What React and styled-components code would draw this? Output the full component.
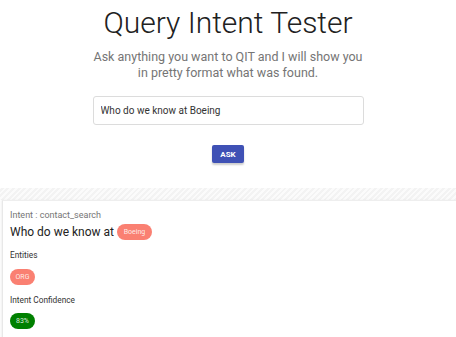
import styled, { createGlobalStyle } from 'styled-components';

const GlobalStyle = createGlobalStyle`
  body {
    margin: 0;
    background: #ffffff;
    font-family: Roboto, "Liberation Sans", sans-serif;
  }
`;

const Page = styled.div`
  width: 100%;
  overflow: hidden;
`;

const Header = styled.header`
  display: flex;
  flex-direction: column;
  align-items: center;
  padding-top: 5px;
`;

const Title = styled.h1`
  margin: 0;
  font-size: 30px;
  font-weight: 300;
  line-height: 36px;
  color: #212121;
`;

const Subtitle = styled.p`
  margin: 8px 0 0;
  width: 272px;
  text-align: center;
  font-size: 12.5px;
  line-height: 16px;
  color: #757575;
`;

const QueryInput = styled.input`
  margin-top: 15px;
  width: 271px;
  height: 29px;
  box-sizing: border-box;
  padding: 0 7px;
  border: 1px solid #dcdcdc;
  border-radius: 3px;
  font-family: Roboto, "Liberation Sans", sans-serif;
  font-size: 10px;
  color: #333;
  outline: none;
`;

const AskButton = styled.button`
  margin-top: 20px;
  width: 32px;
  height: 18px;
  padding: 0;
  border: none;
  border-radius: 2px;
  background: #3f51b5;
  color: #ffffff;
  font-family: Roboto, "Liberation Sans", sans-serif;
  font-size: 8px;
  font-weight: 700;
  box-shadow: 0 2px 2px rgba(0, 0, 0, 0.2);
`;

const Stripes = styled.div`
  margin-top: 25px;
  height: 12px;
  background: repeating-linear-gradient(
    -45deg,
    #f3f3f3 0,
    #f3f3f3 2px,
    #fbfbfb 2px,
    #fbfbfb 4px
  );
`;

const Card = styled.section`
  margin-left: 2px;
  padding: 9px 8px 10px 7px;
  border-top: 1px solid #eeeeee;
  border-left: 1px solid #e8e8e8;
  box-shadow: -1px 0 2px rgba(0, 0, 0, 0.06);
  display: flex;
  flex-direction: column;
  align-items: flex-start;
`;

const IntentLabel = styled.div`
  font-size: 9px;
  color: #757575;
  line-height: 10px;
`;

const Sentence = styled.div`
  margin-top: 4px;
  display: flex;
  align-items: center;
  gap: 3px;
  font-size: 12px;
  color: #222;
  line-height: 16px;
`;

const SectionLabel = styled.div`
  margin-top: ${(p) => p.$top}px;
  font-size: 8.3px;
  color: #333;
  line-height: 10px;
`;

const Badge = styled.span`
  display: inline-flex;
  align-items: center;
  justify-content: center;
  box-sizing: border-box;
  height: 16px;
  min-width: ${(p) => p.$width}px;
  padding: 0 5px;
  border-radius: 8px;
  background: ${(p) => p.$color};
  color: rgba(255, 255, 255, 0.85);
  font-size: 7px;
  line-height: 1;
  margin-top: ${(p) => p.$top || 0}px;
`;

const App = () => (
  <Page>
    <GlobalStyle />
    <Header>
      <Title>Query Intent Tester</Title>
      <Subtitle>Ask anything you want to QIT and I will show you in pretty format what was found.</Subtitle>
      <QueryInput defaultValue="Who do we know at Boeing" />
      <AskButton>ASK</AskButton>
    </Header>
    <Stripes />
    <Card>
      <IntentLabel>Intent : contact_search</IntentLabel>
      <Sentence>
        Who do we know at <Badge $color="#fa8072" $width={35}>Boeing</Badge>
      </Sentence>
      <SectionLabel $top={10}>Entities</SectionLabel>
      <Badge $color="#fa8072" $width={25} $top={9}>ORG</Badge>
      <SectionLabel $top={10}>Intent Confidence</SectionLabel>
      <Badge $color="#008000" $width={25} $top={8}>83%</Badge>
    </Card>
  </Page>
);

export default App;
